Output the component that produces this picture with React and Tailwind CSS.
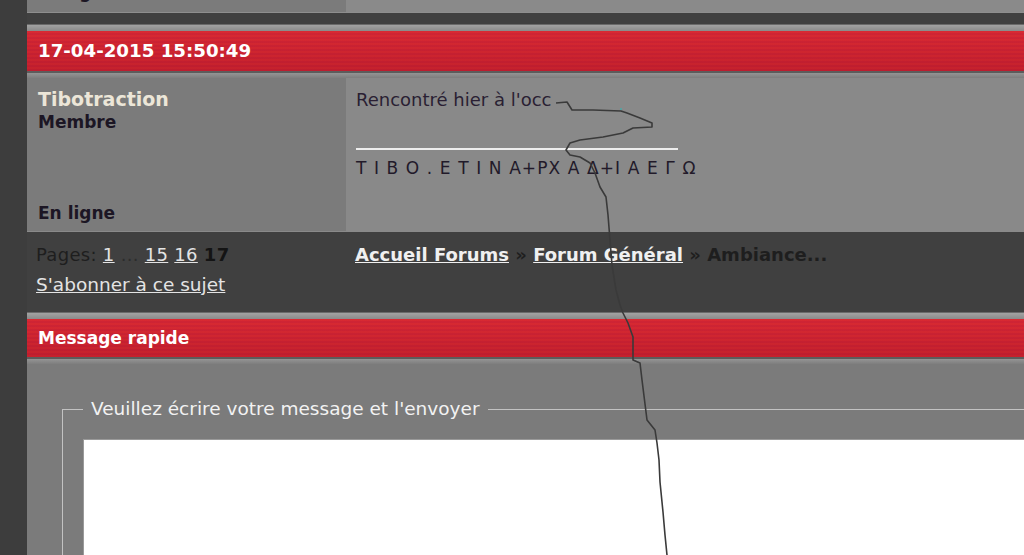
const font = { fontFamily: '"DejaVu Sans", Verdana, sans-serif' }

function Bevel({ bottom }) {
    // thin grey rim around the red header bars
    return bottom ? (
        <div className="h-[7px] shrink-0 border-t-2 border-[#5c5c5c] bg-[linear-gradient(to_bottom,#949494,#7e7e7e)]" />
    ) : (
        <div className="h-[7px] shrink-0 border-t border-[#6a6a6a] bg-[linear-gradient(to_bottom,#a2a2a2,#8a8a8a)]" />
    )
}

function RedBar({ children, h }) {
    return (
        <div
            className={`${h} shrink-0 flex items-center font-bold text-white bg-[repeating-linear-gradient(to_bottom,#d52832_0px,#d52832_2px,#cc2334_2px,#cc2334_4px)]`}
        >
            <div className="flex items-center w-full h-full px-[11px] bg-[linear-gradient(to_bottom,rgba(255,60,60,0.08),rgba(120,0,20,0.18))]">
                {children}
            </div>
        </div>
    )
}

function Crack() {
    const pts = [
        [556, 103], [567, 102], [572, 110], [593, 110], [621, 111], [627, 113], [640, 118],
        [652, 123], [652, 127], [633, 128], [623, 133], [603, 137], [580, 140], [570, 143],
        [566, 150], [570, 155], [580, 157], [590, 163], [595, 173], [600, 187], [606, 197],
        [608, 215], [610, 240], [612, 265], [616, 290], [620, 305], [623, 313], [628, 323],
        [633, 337], [633, 360], [640, 363], [642, 380], [647, 420], [655, 430], [657, 443],
        [659, 460], [660, 482], [663, 512], [665, 535], [667, 555],
    ]
    return (
        <svg className="absolute inset-0 pointer-events-none" width="1024" height="555" viewBox="0 0 1024 555">
            <polyline
                points={pts.map(p => p.join(',')).join(' ')}
                fill="none"
                stroke="#3a3a3a"
                strokeWidth="1.6"
                strokeLinejoin="round"
            />
            <rect x="620" y="108" width="2" height="2" fill="#5aa0a0" />
        </svg>
    )
}

export default function App() {
    return (
        <div className="relative w-[1024px] h-[555px] overflow-hidden flex bg-[#3d3d3d]" style={font}>
            {/* left page gutter */}
            <div className="w-[27px] shrink-0 bg-[#3d3d3d]" />

            <div className="flex-1 min-w-0 flex flex-col">
                {/* end of the previous post */}
                <div className="h-[13px] shrink-0 flex border-b border-[#8e8e8e]">
                    <div className="w-[319px] bg-[#7b7b7b] overflow-hidden flex items-end">
                        <div className="pl-[11px] text-[17px] font-bold leading-[20px] text-[#1c1624] mb-[10px]">En ligne</div>
                    </div>
                    <div className="flex-1 bg-[#8a8a8a]" />
                </div>
                <div className="h-[11px] shrink-0 bg-[#404040]" />

                {/* post header */}
                <Bevel />
                <RedBar h="h-[40px]">
                    <span className="text-[18.2px] leading-none">17-04-2015 15:50:49</span>
                </RedBar>
                <Bevel bottom />

                {/* post body */}
                <div className="h-[154px] shrink-0 flex border-b border-[#8a8a8a]">
                    <div className="w-[319px] bg-[#7b7b7b] flex flex-col justify-between pl-[11px] pt-[9px] pb-[7px]">
                        <div>
                            <div className="text-[19px] font-bold leading-[24px] text-[#ece6d8]">Tibotraction</div>
                            <div className="text-[17px] font-bold leading-[22px] text-[#1c1624]">Membre</div>
                        </div>
                        <div className="text-[17px] font-bold leading-[22px] text-[#1c1624]">En ligne</div>
                    </div>
                    <div className="flex-1 bg-[#898989] pl-[10px] pt-[11px]">
                        <div className="text-[18px] leading-[22px] text-[#2a1f33]">Rencontré hier à l'occ</div>
                        <div className="mt-[37px] w-[322px] h-[2px] bg-[#ededed]" />
                        <div className="mt-[8px] text-[17px] leading-[20px] tracking-[1.1px] text-[#221a2a]">
                            T I B O . E T I N A+PX Α Δ+Ι Α Ε Γ Ω
                        </div>
                    </div>
                </div>

                {/* pagination + breadcrumb */}
                <div className="h-[80px] shrink-0 bg-[#404040] flex pt-[12px]">
                    <div className="w-[319px] pl-[9px]">
                        <div className="text-[18px] leading-[22px] tracking-[0.3px] text-[#1e1e1e]">
                            Pages:{' '}
                            <a className="underline text-[#e4e4e4]">1</a>
                            {' '}<span className="text-[#2c2c2c]">...</span>{' '}
                            <a className="underline text-[#e4e4e4]">15</a>{' '}
                            <a className="underline text-[#e4e4e4]">16</a>{' '}
                            <span className="font-bold text-[#141414]">17</span>
                        </div>
                        <div className="mt-[8px] text-[18.5px] leading-[22px]">
                            <a className="underline text-[#e4e4e4]">S'abonner à ce sujet</a>
                        </div>
                    </div>
                    <div className="flex-1 pl-[9px] text-[18px] font-bold leading-[22px] text-[#1e1e1e]">
                        <a className="underline text-[#f0f0f0]">Accueil Forums</a>
                        <span className="text-[#1e1e1e]"> » </span>
                        <a className="underline text-[#f0f0f0]">Forum Général</a>
                        <span className="text-[#1e1e1e]"> » Ambiance...</span>
                    </div>
                </div>

                {/* quick reply */}
                <Bevel />
                <RedBar h="h-[38px]">
                    <span className="text-[17px] leading-none">Message rapide</span>
                </RedBar>
                <Bevel bottom />

                <div className="flex-1 shrink-0 bg-[#7b7b7b] pt-[34px] pl-[35px]">
                    <fieldset className="border border-[#c2c2c2] border-r-0 pl-[20px] h-[300px]">
                        <legend className="px-[8px] text-[18.5px] leading-[22px] text-[#f2f2f2]">
                            Veuillez écrire votre message et l'envoyer
                        </legend>
                        <textarea className="mt-[19px] block w-full h-[250px] bg-white border-l border-t border-[#9a9a9a] resize-none outline-none" />
                    </fieldset>
                </div>
            </div>

            <Crack />
        </div>
    )
}
